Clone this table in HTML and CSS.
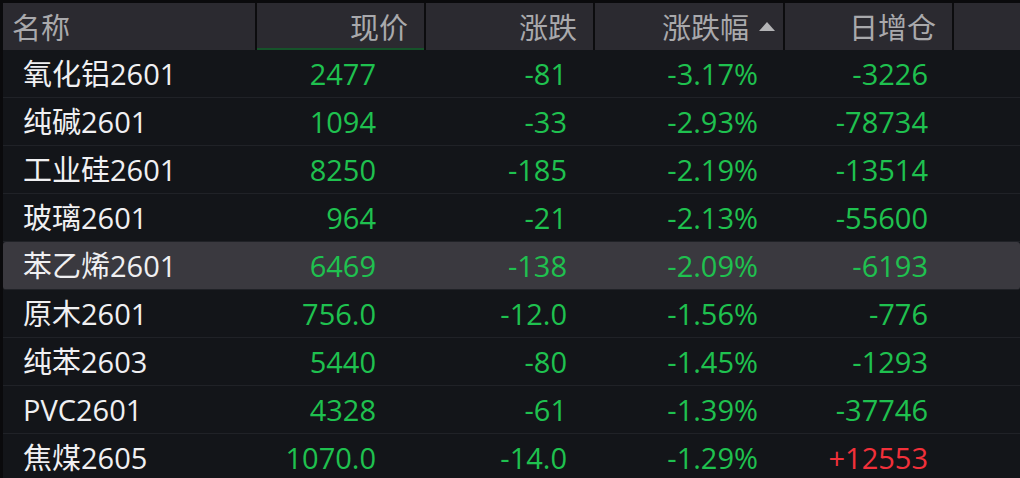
FILE: index.html
```html
<!DOCTYPE html>
<html lang="zh">
<head>
<meta charset="utf-8">
<link rel="stylesheet" href="styles.css">
</head>
<body>
<div class="board">
  <div class="head">
    <div class="hc hc-name">名称</div>
    <div class="hc hc-price">现价</div>
    <div class="hc hc-chg">涨跌</div>
    <div class="hc hc-pct">涨跌幅<svg class="tri" width="16" height="10" viewBox="0 0 16 10"><path d="M0 10 L8 1 L16 10 Z" fill="#b4b4b6"/></svg></div>
    <div class="hc hc-oi">日增仓</div>
    <div class="hc hc-rest"></div>
  </div>
  <div class="rows">
    <div class="row"><span class="name">氧化铝2601</span><span class="g">2477</span><span class="g">-81</span><span class="g">-3.17%</span><span class="g">-3226</span></div>
    <div class="row"><span class="name">纯碱2601</span><span class="g">1094</span><span class="g">-33</span><span class="g">-2.93%</span><span class="g">-78734</span></div>
    <div class="row"><span class="name">工业硅2601</span><span class="g">8250</span><span class="g">-185</span><span class="g">-2.19%</span><span class="g">-13514</span></div>
    <div class="row"><span class="name">玻璃2601</span><span class="g">964</span><span class="g">-21</span><span class="g">-2.13%</span><span class="g">-55600</span></div>
    <div class="row sel"><span class="name">苯乙烯2601</span><span class="g">6469</span><span class="g">-138</span><span class="g">-2.09%</span><span class="g">-6193</span></div>
    <div class="row"><span class="name">原木2601</span><span class="g">756.0</span><span class="g">-12.0</span><span class="g">-1.56%</span><span class="g">-776</span></div>
    <div class="row"><span class="name">纯苯2603</span><span class="g">5440</span><span class="g">-80</span><span class="g">-1.45%</span><span class="g">-1293</span></div>
    <div class="row"><span class="name">PVC2601</span><span class="g">4328</span><span class="g">-61</span><span class="g">-1.39%</span><span class="g">-37746</span></div>
    <div class="row"><span class="name">焦煤2605</span><span class="g">1070.0</span><span class="g">-14.0</span><span class="g">-1.29%</span><span class="r">+12553</span></div>
  </div>
</div>
</body>
</html>
```
FILE: styles.css
```css
html, body {
  margin: 0;
  padding: 0;
  background: #000;
}
body {
  width: 1020px;
  height: 478px;
  overflow: hidden;
  font-family: "Open Sans", "Noto Sans CJK SC", sans-serif;
  font-size: 29px;
}
.board {
  padding: 3px 0 0 3px;
  height: 475px;
  background: #0a0a0c;
}
.head {
  display: flex;
  height: 47px;
  background: #2b2a30;
  color: #a9a9ac;
}
.hc {
  display: flex;
  align-items: center;
  justify-content: flex-end;
  padding-right: 16px;
  padding-top: 2px;
  box-sizing: border-box;
  border-right: 2px solid #0c0c0e;
  line-height: 1;
}
.hc-name { width: 254px; justify-content: flex-start; padding-left: 9px; padding-right: 0; }
.hc-price { width: 169px; box-shadow: inset 0 -2px 0 #16532a; }
.hc-chg { width: 169px; }
.hc-pct { width: 190px; padding-right: 8px; }
.hc-oi { width: 169px; }
.hc-rest { flex: 1; border-right: 0; }
.tri { margin-left: 10px; margin-top: -4px; }
.rows {
  background: #131519;
  height: 428px;
}
.row {
  display: grid;
  grid-template-columns: 253px 120px 191px 191px 170px 1fr;
  height: 47px;
  align-items: center;
  border-bottom: 1px solid #202227;
  line-height: 1;
  box-sizing: content-box;
}
.row.sel {
  background: #3a393f;
  border-radius: 3px;
}
.row span { text-align: right; }
.row .name { text-align: left; padding-left: 20px; color: #f0f0f2; }
.g { color: #1fc14f; }
.r { color: #f2303a; }
```
